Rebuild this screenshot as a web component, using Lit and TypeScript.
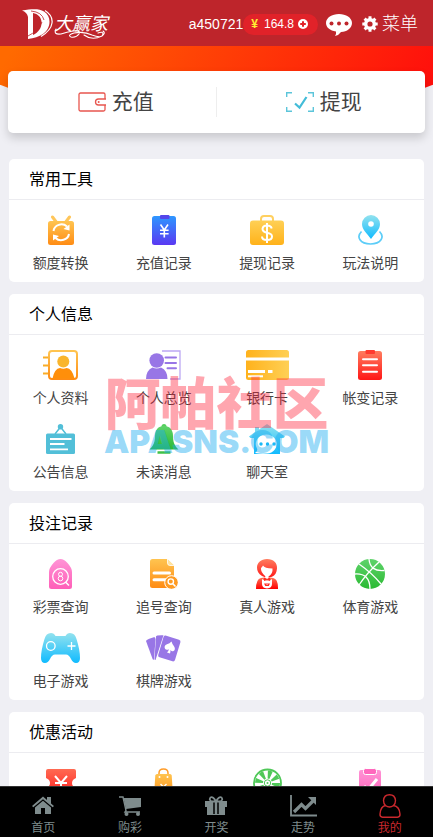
import { LitElement, html, svg, css, nothing, TemplateResult } from "lit";
import { customElement, state } from "lit/decorators.js";

type Glyph = { w: number; h: number; art: TemplateResult<2> };
type Entry = { label: string; icon: string };
type Group = { title: string; entries: Entry[] };

const gradients: [string, string, string][] = [
  ["orange", "#ffc450", "#ff8c14"],
  ["blue", "#2e97ff", "#5a38f2"],
  ["yellow", "#ffd055", "#ffb21a"],
  ["cyan", "#93e2ee", "#10bbff"],
  ["red", "#ff7d5f", "#ff1616"],
  ["scarlet", "#ff7458", "#ff0000"],
  ["pink", "#ff94d6", "#ff5fb8"],
  ["green", "#5fd36b", "#2bba33"],
  ["ticket", "#ff6a52", "#ff1e1e"],
];

const glyphs: Record<string, Glyph> = {
  transfer: { w: 26, h: 30, art: svg`
    <path d="M9 8 4.500 2M17 8l4.500-6" stroke="#ffc65a" stroke-width="3" stroke-linecap="round" fill="none"/>
    <rect y="6" width="26" height="24" rx="2.500" fill="url(#orange)"/>
    <path d="M5.500 16a8 7.500 0 0 1 13.500-4.500M21 19a8 7.500 0 0 1-13.500 4" stroke="#fff" stroke-width="2" fill="none"/>
    <path d="M21.500 9.500v6l-6-1.500zM5 25.500v-6l6 1.500z" fill="#fff"/>` },
  deposit: { w: 24, h: 30, art: svg`
    <rect y="1" width="24" height="29" rx="2.500" fill="url(#blue)"/>
    <rect x="8" width="9.500" height="4" rx="1" fill="#5446ea"/>
    <path d="M8.500 9.500l3.800 5.500 3.700-5.500M12.300 15v7.500M8 15.300h8.600M8 18.700h8.600" stroke="#fff" stroke-width="1.600" fill="none"/>` },
  withdraw: { w: 34, h: 30, art: svg`
    <path d="M11 7V4q0-3 3-3h6q3 0 3 3v3" stroke="#ffd060" stroke-width="2" fill="none"/>
    <rect y="5.500" width="34" height="24.500" rx="3" fill="url(#yellow)"/>
    <path d="M21.700 13.500q-.7-3-4.700-3t-4.500 3.300q0 3 4.500 3.900 5 .8 5 3.800 0 3.500-5 3.500t-5-3.500M17 8v20" stroke="#fff" stroke-width="2" fill="none"/>` },
  guide: { w: 25, h: 30, art: svg`
    <path d="M3.500 16.500C-2 22 2 29 12.500 29S27 22 21.500 16.500" stroke="#5ccdf8" stroke-width="1.700" fill="none"/>
    <path d="M13 24C9 18.500 4 14.500 4 9a9 9 0 0 1 18 0c0 5.500-5 9.500-9 15z" fill="url(#cyan)"/>
    <circle cx="13" cy="9" r="2.800" fill="#fff"/>` },
  profile: { w: 35, h: 30, art: svg`
    <path d="M0 7.500h6M0 15.500h6M0 23.500h6" stroke="#f9ad27" stroke-width="2"/>
    <rect x="6" y="1" width="28" height="28" rx="3" fill="none" stroke="url(#orange)" stroke-width="2"/>
    <circle cx="20.300" cy="11.500" r="6" fill="#f9b52c"/>
    <path d="M9.500 28.500q2-10 7.500-10.500 3.300 1.600 6.600 0 5.500.5 7.900 10.500z" fill="#ff8f0a"/>` },
  overview: { w: 35, h: 30, art: svg`
    <path d="M16 1h18v28H24" stroke="#bca8f3" stroke-width="1.300" fill="none"/>
    <circle cx="10.700" cy="10.500" r="7.300" fill="#9876e6"/>
    <path d="M0 29q0-8.500 6.500-11.500 4.200 2 8.500 0 6.500 3 6.500 11.500z" fill="#9876e6"/>
    <path d="M19.500 7.500H30M19.500 13H30M21.500 18.300H30" stroke="#9876e6" stroke-width="2" stroke-linecap="round"/>` },
  bankcard: { w: 43, h: 30, art: svg`
    <rect width="43" height="30" rx="2.500" fill="url(#gold)"/>
    <path d="M0 9h43" stroke="#fff" stroke-width="3"/>
    <path d="M2 21.500h17M22 21.500h4.500" stroke="#fff" stroke-width="3"/>
    <path d="M2 26.300h15" stroke="#fff" stroke-width="2"/>` },
  ledger: { w: 24, h: 30, art: svg`
    <rect y="1" width="24" height="29" rx="2.500" fill="url(#red)"/>
    <rect x="7.500" width="9.500" height="4" rx="1" fill="#ff3b30"/>
    <path d="M5 9.200h14M5 15.300h14M5 21.700h14" stroke="#fff" stroke-width="2" stroke-linecap="round"/>` },
  notice: { w: 29, h: 30, art: svg`
    <circle cx="14.500" cy="2.700" r="2.700" fill="#52bfd8"/>
    <path d="M14.500 3 9 10M14.500 3 20 10" stroke="#52bfd8" stroke-width="1.500"/>
    <rect y="9.500" width="29" height="20.500" rx="1.500" fill="#52bfd8"/>
    <path d="M4 15h21.500M4 20h14.500M4 25.300h18" stroke="#fff" stroke-width="1.800"/>` },
  bell: { w: 30, h: 30, art: svg`
    <circle cx="15" cy="2.500" r="2.500" fill="#55cf5d"/>
    <path d="M15 2c6 0 9 4 9 10 0 8 3 11 5.500 13.500H.5C3 23 6 20 6 12 6 6 9 2 15 2z" fill="url(#green)"/>
    <path d="M8.500 28.500h13" stroke="#3fc147" stroke-width="2.500"/>` },
  chat: { w: 36, h: 30, art: svg`
    <path d="M18 0 36 12.500l-1.500 1.500H31v16H5V14H1.500L0 12.500 6 8V3h4v2.500z" fill="url(#cyan)"/>
    <path d="M6 29q3-2 2-4.500A10.500 9.500 0 1 1 18 29.500q-6 .5-12-.5z" fill="#fff"/>
    <circle cx="12" cy="20" r="1.700" fill="#19b9f8"/><circle cx="18.500" cy="20" r="1.700" fill="#19b9f8"/><circle cx="25" cy="20" r="1.700" fill="#19b9f8"/>` },
  lottery: { w: 23, h: 30, art: svg`
    <path d="M11.500 0q3.500 0 7 4 4.500 5 4.500 9v14.500q0 2.500-2.500 2.500h-18Q0 30 0 27.500V13Q0 9 4.500 4q3.500-4 7-4z" fill="url(#pink)"/>
    <circle cx="11.500" cy="17.500" r="7.800" stroke="#fff" stroke-width="1.300" fill="none"/>
    <path d="M16.500 23l3.500 3.500" stroke="#fff" stroke-width="1.500"/>
    <circle cx="11.500" cy="15.300" r="2" stroke="#fff" fill="none"/><circle cx="11.500" cy="19.500" r="2.300" stroke="#fff" fill="none"/>` },
  chase: { w: 28, h: 30, art: svg`
    <path d="M2.500 0H17l7 6.500V26.500q0 2.500-2.500 2.500h-19Q0 29 0 26.500v-24Q0 0 2.500 0z" fill="url(#orange)"/>
    <path d="M17.500 0v4q0 2.500 2.500 2.500h4" fill="#ffe3a1" stroke="#fff" stroke-width=".8"/>
    <path d="M4 14h15.500M4 20.800h12" stroke="#fff" stroke-width="3" stroke-linecap="round"/>
    <circle cx="21.500" cy="23.500" r="6.800" fill="#ff9b22" stroke="#fff" stroke-width="1"/>
    <circle cx="20.800" cy="22.600" r="2.700" stroke="#fff" stroke-width="1.400" fill="none"/><path d="M22.800 24.700l2.700 2.800" stroke="#fff" stroke-width="1.600"/>` },
  dealer: { w: 22, h: 30, art: svg`
    <path d="M11 0c6.500 0 10.500 4 10 9.500-.2 4-2 7-5 8.300L11 19l-5-2C2.500 15 1 12 1 8.500 1 4 5 0 11 0z" fill="url(#red)"/>
    <path d="M7 6.500q1.500 3 9.500 3 .5 5.500-4 8v2.500H9.300v-2.800Q4.500 13 5 9q1-.8 2-2.500z" fill="#fff"/>
    <path d="M0 30q0-10 5-11l3-.5 3.200 1.500 3-1.500 3 .5q5 1 4.800 11z" fill="url(#scarlet)"/>
    <path d="M6 20l2.500 1.500h5.500L16 20v5q0 4-5 4.500-5-.5-5-4.500z" fill="#fff"/>
    <path d="M8 18.500l3 1.500 3-1.500v3.500l-3-1.500-3 1.500zM10.300 24h1.600v1.600h-1.600zM8 24.500l1.300 2.500h3.500L14 24.500" fill="#ff2a22"/>` },
  sports: { w: 30, h: 30, art: svg`
    <circle cx="15" cy="15" r="15" fill="url(#green)"/>
    <path d="M4 5q13 9 22 20M24 3Q12 14 4 26M14 0q1 13 15.500 11.500M0 15q15-1 15 15" stroke="#fff" stroke-width="1.300" fill="none"/>` },
  gamepad: { w: 39, h: 30, art: svg`
    <path d="M10 0q3 0 4.500 3h10Q26 0 29 0q5 0 6.500 6Q39 17 39 25q0 5-4 5-3 0-5-4-2-4.500-5-4.500H14q-3 0-5 4.500-2 4-5 4-4 0-4-5Q0 17 3.500 6 5 0 10 0z" fill="url(#cyan)"/>
    <circle cx="9.800" cy="13" r="4.300" stroke="#fff" stroke-width="1.300" fill="none"/>
    <path d="M30.500 9v8M26.500 13h8" stroke="#fff" stroke-width="1.300"/>` },
  poker: { w: 35, h: 30, art: svg`
    <path d="M0 8q0-1.500 8.500-4l1 2L8 26.500q-1 .5-1.500-.7z" fill="#9876e6"/>
    <path d="M10 3.500q0-1.500 7.500-1.200L9.500 27q-1 .3-1-1z" fill="#9876e6"/>
    <path d="M19.500 2.500 33 6.700q2 .6 1.400 2.500L29 27q-.7 1.800-2.500 1.300l-13-4q-1.800-.6-1.300-2.300L17.500 4q.5-2 2-1.500z" fill="#9876e6"/>
    <path d="M25.500 8.500q1 3.500 2.500 4.700 2 3.300-.5 4.800-1.700.8-3-1 0 2-.5 3.500l-3-1q1.500-1.500 2-3.300-2.700 1.300-4-.5-1.500-3 2-4.500 2.700-.7 4.500-2.700z" fill="#fff"/>` },
  coupon: { w: 30, h: 30, art: svg`
    <path d="M2 1h26q2 0 2 2v7q-4 1.500-4 5t4 5v7q0 2-2 2H2q-2 0-2-2v-7q4-1.500 4-5t-4-5V3q0-2 2-2z" fill="url(#ticket)"/>
    <path d="M9 8l6 7 6-7M15 15v10M9 15h12M9 19h12" stroke="#fff" stroke-width="2" fill="none"/>` },
  bag: { w: 19, h: 30, art: svg`
    <path d="M5 8V5q0-4 4.500-4T14 5v3" stroke="#ff9d2a" stroke-width="1.500" fill="none"/>
    <path d="M3 6h13q1.500 0 1.700 1.500L19 28q0 2-2 2H2q-2 0-2-2L1.300 7.500Q1.500 6 3 6z" fill="url(#orange)"/>
    <circle cx="5.500" cy="9" r="1" fill="#fff"/><circle cx="13.500" cy="9" r="1" fill="#fff"/>
    <path d="M6.500 16l3 3 3-3M9.500 19v7M6.500 21h6" stroke="#fff" stroke-width="1.400" fill="none"/>` },
  wheel: { w: 29, h: 30, art: svg`
    <circle cx="14.500" cy="15" r="13.500" stroke="#4fc858" stroke-width="1.800" fill="#fff"/>
    <circle cx="14.500" cy="15" r="8.500" stroke="#4fc858" stroke-width="8" stroke-dasharray="3.340 3.340" fill="none"/>
    <circle cx="14.500" cy="15" r="3.200" stroke="#4fc858" fill="#fff"/><circle cx="14.500" cy="15" r="1" fill="#4fc858"/>` },
  task: { w: 22, h: 30, art: svg`
    <rect y="2" width="22" height="28" rx="2" fill="url(#pink)"/>
    <rect x="4.500" y=".5" width="13" height="6" rx="2" fill="#ff68bd" stroke="#fff"/>
    <path d="M5 18l4 4 9-11" stroke="#fff" stroke-width="3" fill="none"/>` },
  wallet: { w: 28, h: 20, art: svg`
    <rect x="1" y="1" width="26" height="18" rx="1.500" stroke="#e8564f" stroke-width="1.300" fill="none"/>
    <path d="M28 7h-7.500q-3 0-3 3t3 3H28" fill="#fff" stroke="#e8564f" stroke-width="1.300"/>
    <circle cx="20.700" cy="10" r="1" fill="#e8564f"/>` },
  check: { w: 28, h: 20, art: svg`
    <path d="M.7 5V.7H6M22 .7h5.300V5M.7 15v4.300H6M22 19.300h5.300V15" stroke="#5cc5da" stroke-width="1.400" fill="none"/>
    <path d="M9 11.500l4.500 4L20.500 5" stroke="#43bcd8" stroke-width="2.200" fill="none"/>` },
  plus: { w: 10, h: 10, art: svg`
    <circle cx="5" cy="5" r="5" fill="#fff"/><path d="M5 2.200v5.600M2.200 5h5.600" stroke="#e12229" stroke-width="2"/>` },
  bubble: { w: 26, h: 22, art: svg`
    <path d="M13 0c7 0 13 3.800 13 9s-5 8.700-11 9q-2 3-6 4 1.500-2 1-4.500C4 16.500 0 13.500 0 9c0-5.200 6-9 13-9z" fill="#fff"/>
    <circle cx="5.500" cy="9.500" r="2" fill="#be252b"/><circle cx="13" cy="9.500" r="2" fill="#be252b"/><circle cx="20.500" cy="9.500" r="2" fill="#be252b"/>` },
  gear: { w: 16, h: 16, art: svg`
    <circle cx="8" cy="8" r="4.300" stroke="#fff" stroke-width="3.400" fill="none"/>
    <path d="M8 .3v3M8 12.700v3M.3 8h3M12.700 8h3M2.600 2.600l2 2M11.400 11.400l2 2M2.600 13.400l2-2M11.400 4.600l2-2" stroke="#fff" stroke-width="3"/>` },
  emblem: { w: 31, h: 30, art: svg`
    <path d="M0 1.500C10 0 17-.5 22 2.500c8 5 7 17-1 22.500-4 2.700-9 4-15 5V8Q5 3 0 1.500zM11 4v22c6-3 9-8 8.500-13.500C19 8 16 5 11 4z" fill="#fff" fill-rule="evenodd"/>
    <path d="M23 1.500q8 5 7 12.500t-11 13.500" stroke="#fff" stroke-width="1.200" fill="none"/>
    <path d="M9 2q11 1 13 9M6 27q10-5 14-14" stroke="#be252b" stroke-width=".8" fill="none"/>` },
  swash: { w: 54, h: 12, art: svg`
    <path d="M2 1q-3 6 5 5 6-2 12-3 8-1 6 3-3 4-8 3-4-2 3-4 10-2 18 2 10 4 11-1 0-3-5-1M30 7q8 6 18 1 4-3 1-5" stroke="#fff" stroke-width="1.100" fill="none" stroke-linecap="round"/>` },
  home: { w: 22, h: 20, art: svg`
    <path d="M0 10 11 .5l4 3.500V1h4v6.500l3 2.500-1.300 1.300L11 3.200 1.300 11.300zM3 11.500l8-6.700 8 6.700V18h-6v-6H9v6H3z" fill="currentColor"/>` },
  cart: { w: 22, h: 20, art: svg`
    <path d="M4.500 2H22v9L7 13z" fill="currentColor"/>
    <path d="M0 1h4l3 13.500L6 16h15" stroke="currentColor" stroke-width="1.400" fill="none"/>
    <circle cx="7.500" cy="18" r="2" fill="currentColor"/><circle cx="19" cy="18" r="2" fill="currentColor"/>` },
  gift: { w: 22, h: 20, art: svg`
    <path d="M11 5.500Q8 0 5.500 1.500 3.500 4 7 5.500zM11 5.500Q14 0 16.500 1.500 18.500 4 15 5.500z" fill="none" stroke="currentColor" stroke-width="1.800"/>
    <path d="M0 5h22v6H0zM2 11h18v8H2z" fill="currentColor"/><path d="M9 6.500v11.500M13 6.500v11.500" stroke="#000" stroke-width="1.500"/>` },
  trend: { w: 27, h: 22, art: svg`
    <path d="M1 0v20.500h26" stroke="currentColor" stroke-width="1.800" fill="none"/>
    <path d="M4 17l7.500-7.500 4 4L23 6" stroke="currentColor" stroke-width="3.200" fill="none"/><path d="M18 2h8v8z" fill="currentColor"/>` },
  me: { w: 22, h: 24, art: svg`
    <path d="M6.500 11.500q-2-2-2-5Q5 .7 10.500.7t6 5.800q0 3-2 5 6 1 6.500 8.500.2 3-2.500 3.200H3.500Q.8 23 1 20q.5-7.500 5.500-8.500 4 3 8 0" stroke="currentColor" stroke-width="1.400" fill="none"/>` },
};

const icon = (name: string) => {
  const g = glyphs[name];
  return html`<svg width=${g.w} height=${g.h} viewBox="0 0 ${g.w} ${g.h}" aria-hidden="true">${g.art}</svg>`;
};

const groups: Group[] = [
  { title: "常用工具", entries: [
    { label: "额度转换", icon: "transfer" },
    { label: "充值记录", icon: "deposit" },
    { label: "提现记录", icon: "withdraw" },
    { label: "玩法说明", icon: "guide" },
  ] },
  { title: "个人信息", entries: [
    { label: "个人资料", icon: "profile" },
    { label: "个人总览", icon: "overview" },
    { label: "银行卡", icon: "bankcard" },
    { label: "帐变记录", icon: "ledger" },
    { label: "公告信息", icon: "notice" },
    { label: "未读消息", icon: "bell" },
    { label: "聊天室", icon: "chat" },
  ] },
  { title: "投注记录", entries: [
    { label: "彩票查询", icon: "lottery" },
    { label: "追号查询", icon: "chase" },
    { label: "真人游戏", icon: "dealer" },
    { label: "体育游戏", icon: "sports" },
    { label: "电子游戏", icon: "gamepad" },
    { label: "棋牌游戏", icon: "poker" },
  ] },
  { title: "优惠活动", entries: [
    { label: "", icon: "coupon" },
    { label: "", icon: "bag" },
    { label: "", icon: "wheel" },
    { label: "", icon: "task" },
  ] },
];

const tabs: Entry[] = [
  { label: "首页", icon: "home" },
  { label: "购彩", icon: "cart" },
  { label: "开奖", icon: "gift" },
  { label: "走势", icon: "trend" },
  { label: "我的", icon: "me" },
];

@customElement("app-root")
export class AppRoot extends LitElement {
  @state() private active = 4;

  static styles = css`
    :host {
      display: flex;
      flex-direction: column;
      position: relative;
      height: 100vh;
      background: #efeff4;
      color: #444;
      font: 14px/20px "Liberation Sans", "Noto Sans CJK SC", sans-serif;
    }
    * { box-sizing: border-box; }
    svg { display: block; flex: none; }
    a { color: inherit; text-decoration: none; }
    button { border: 0; padding: 0; background: none; color: inherit; font: inherit; cursor: pointer; }
    .defs { position: absolute; }

    .bar {
      display: flex;
      align-items: center;
      flex: none;
      height: 46px;
      padding: 2px 15px 0 22px;
      background: #be252b;
      color: #fff;
    }
    .logo { display: flex; align-items: center; gap: 1px; margin-right: auto; }
    .brand { position: relative; font-size: 18px; font-style: italic; }
    .swash { position: absolute; left: 0; top: 14px; }
    .balance {
      display: flex;
      align-items: center;
      gap: 4px;
      height: 21px;
      padding: 0 10px 0 8px;
      border-radius: 11px;
      background: #e12229;
      font-size: 12px;
    }
    .yen { margin-right: 2px; color: #ffee32; font-weight: 700; }
    .bubble { margin: 2px 10px 0 8px; }
    .menu { display: flex; align-items: center; gap: 4px; font-size: 18px; font-weight: 300; }

    main { flex: 1; min-height: 0; overflow-y: auto; scrollbar-width: none; }
    .hero { position: relative; overflow: hidden; padding: 25px 8px 26px; }
    .hero::before {
      content: "";
      position: absolute;
      top: 0;
      left: -10%;
      width: 120%;
      height: 70px;
      border-radius: 0 0 50% 50% / 0 0 100% 100%;
      background: linear-gradient(120deg, #ff6a00 10%, #ff100c 88%);
    }
    .funds {
      position: relative;
      display: grid;
      grid-template-columns: 1fr 1fr;
      padding: 16px 2px 16px 0;
      border-radius: 5px;
      background: #fff;
      box-shadow: 0 5px 10px rgba(0, 0, 0, 0.16);
    }
    .fund {
      display: flex;
      align-items: center;
      justify-content: center;
      gap: 6px;
      height: 30px;
      padding-left: 8px;
      font-size: 21px;
    }
    .fund + .fund { border-left: 1px solid #eee; }

    .groups { display: grid; gap: 12px; padding: 0 9px 12px; }
    .group { border-radius: 5px; background: #fff; }
    h2 {
      margin: 0;
      padding: 2px 20px 0;
      border-bottom: 1px solid #ececf0;
      color: #000;
      font-size: 16px;
      font-weight: 400;
      line-height: 38px;
    }
    .grid { display: grid; grid-template-columns: repeat(4, 1fr); padding: 4px 2px 4px 0; }
    .item {
      display: flex;
      flex-direction: column;
      align-items: center;
      gap: 8px;
      height: 74px;
      padding-top: 11px;
    }

    .tabs {
      display: grid;
      grid-template-columns: repeat(5, 1fr);
      flex: none;
      height: 51px;
      border-top: 1px solid #333;
      background: #000;
      color: #7f8c8d;
      font-size: 12px;
      line-height: 18px;
    }
    .tab { display: flex; flex-direction: column; align-items: center; }
    .pic { display: flex; align-items: center; height: 32px; padding-top: 6px; }
    .tab.on { color: #c9282d; }

    .mark {
      position: absolute;
      inset: 0;
      display: flex;
      flex-direction: column;
      align-items: center;
      justify-content: center;
      padding-bottom: 4px;
      pointer-events: none;
      font-weight: 900;
    }
    .cn { color: rgba(255, 32, 56, 0.4); font-size: 56px; line-height: 50px; }
    .en { color: rgba(28, 172, 240, 0.46); font-family: Inter, sans-serif; font-size: 32px; line-height: 24px; }
  `;

  render() {
    return html`
      <svg class="defs" width="0" height="0" aria-hidden="true">
        <defs>
          ${gradients.map(([id, a, b]) => svg`
            <linearGradient id=${id} x1="0" y1="0" x2="0" y2="1">
              <stop offset="0" stop-color=${a}/><stop offset="1" stop-color=${b}/>
            </linearGradient>`)}
          <linearGradient id="gold" x1="0" y1="0" x2="1" y2="0">
            <stop offset="0" stop-color="#ffb21c"/><stop offset="1" stop-color="#ffd055"/>
          </linearGradient>
        </defs>
      </svg>
      <header class="bar">
        <a class="logo" href="#home">${icon("emblem")}<span class="brand">大赢家<span class="swash">${icon("swash")}</span></span></a>
        <span>a450721</span>
        <button class="balance"><span class="yen">¥</span><span>164.8</span>${icon("plus")}</button>
        <button class="bubble" aria-label="消息">${icon("bubble")}</button>
        <button class="menu">${icon("gear")}<span>菜单</span></button>
      </header>
      <main>
        <div class="hero">
          <div class="funds">
            <button class="fund">${icon("wallet")}<span>充值</span></button>
            <button class="fund">${icon("check")}<span>提现</span></button>
          </div>
        </div>
        <div class="groups">
          ${groups.map((g) => html`
            <section class="group">
              <h2>${g.title}</h2>
              <div class="grid">
                ${g.entries.map((e) => html`
                  <a class="item" href="#${e.icon}">${icon(e.icon)}${e.label ? html`<span>${e.label}</span>` : nothing}</a>`)}
              </div>
            </section>`)}
        </div>
      </main>
      <nav class="tabs">
        ${tabs.map((t, i) => html`
          <a class="tab ${i === this.active ? "on" : ""}" href="#${t.icon}" @click=${() => (this.active = i)}>
            <span class="pic">${icon(t.icon)}</span><span>${t.label}</span>
          </a>`)}
      </nav>
      <div class="mark"><span class="cn">阿帕社区</span><span class="en">APASNS.COM</span></div>
    `;
  }
}
